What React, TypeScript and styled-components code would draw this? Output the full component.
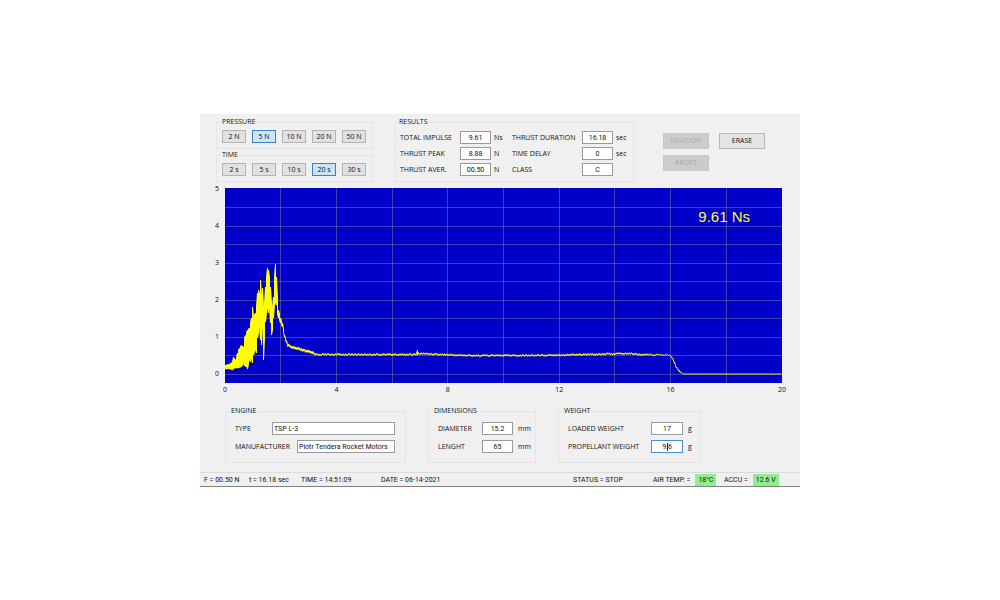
import React, { useState } from 'react'
import styled, { createGlobalStyle } from 'styled-components'

interface Option {
  value: number
  label: string
}

interface Result {
  id: string
  label: string
  value: string
  unit: string
}

const pressures: Option[] = [2, 5, 10, 20, 50].map((value) => ({ value, label: `${value} N` }))
const times: Option[] = [2, 5, 10, 20, 30].map((value) => ({ value, label: `${value} s` }))

const thrustResults: Result[] = [
  { id: 'impulse', label: 'TOTAL IMPULSE', value: '9.61', unit: 'Ns' },
  { id: 'peak', label: 'THRUST PEAK', value: '8.88', unit: 'N' },
  { id: 'aver', label: 'THRUST AVER.', value: '00.50', unit: 'N' },
]

const timeResults: Result[] = [
  { id: 'duration', label: 'THRUST DURATION', value: '16.18', unit: 'sec' },
  { id: 'delay', label: 'TIME DELAY', value: '0', unit: 'sec' },
  { id: 'class', label: 'CLASS', value: 'C', unit: '' },
]

const PLOT_WIDTH = 557
const PLOT_HEIGHT = 195
const ZERO_LINE = 186

// [x, upper edge, lower edge] of the thrust signal
const envelope: number[][] = [
  [0, 177, 181], [4, 176, 181], [7, 174, 182], [8, 169, 181], [10, 172, 180], [13, 162, 180],
  [16, 157, 179], [18, 159, 175], [19, 150, 178], [21, 145, 179], [22, 142, 181], [24, 140, 172],
  [25, 135, 174], [26, 130, 170], [27, 119, 175], [28, 129, 167], [30, 125, 162], [31, 118, 165],
  [32, 105, 150], [33, 102, 145], [34, 106, 138], [35, 92, 152], [36, 108, 157], [37, 100, 139],
  [38, 119, 172], [39, 115, 151], [40, 99, 134], [41, 89, 125], [42, 80, 120], [43, 82, 125],
  [44, 89, 119], [45, 99, 135], [46, 115, 147], [47, 119, 142], [48, 109, 130], [49, 89, 117],
  [50, 76, 115], [51, 89, 117], [52, 109, 126], [53, 122, 130], [55, 130, 135], [57, 135, 139],
  [59, 147, 149], [62, 156, 158], [65, 158, 160], [73, 160, 162], [80, 162, 164], [88, 164, 166],
  [91, 166, 167], [150, 166, 167], [191, 166, 167], [192, 162, 167], [193, 165, 166],
  [215, 166, 167], [240, 167, 168], [300, 167, 168], [360, 166, 167], [404, 165, 166],
  [414, 166, 167], [445, 167, 167], [448, 172, 173], [451, 179, 180], [454, 183, 184],
  [458, 186, 186], [557, 186, 186],
]

const noise = (n: number) => {
  const v = Math.sin(n * 12.9898) * 43758.5453
  return v - Math.floor(v)
}

const buildSignal = () => {
  const points: string[] = []
  let i = 0
  for (let x = 0; x < PLOT_WIDTH; x++) {
    while (i < envelope.length - 2 && envelope[i + 1][0] <= x) i++
    const [x0, top0, bottom0] = envelope[i]
    const [x1, top1, bottom1] = envelope[i + 1]
    const k = (x - x0) / (x1 - x0)
    const wobble = x > 60 && x < 446 ? (noise(x) - 0.5) * 1.2 : 0
    const top = `${x + 0.5},${(top0 + (top1 - top0) * k + wobble).toFixed(1)}`
    const bottom = `${x + 0.5},${(bottom0 + (bottom1 - bottom0) * k + wobble).toFixed(1)}`
    if (x % 2) {
      points.push(bottom, top)
    } else {
      points.push(top, bottom)
    }
  }
  return points.join(' ')
}

const signal = buildSignal()

const ButtonRow: React.FC<{ title: string; options: Option[]; initial: number }> = ({ title, options, initial }) => {
  const [selected, setSelected] = useState(initial)

  return (
    <Group>
      <Legend>{title}</Legend>
      <Options>
        {options.map(({ value, label }) => (
          <OptionButton
            key={value}
            type='button'
            $active={value === selected}
            aria-pressed={value === selected}
            onClick={() => setSelected(value)}
          >
            {label}
          </OptionButton>
        ))}
      </Options>
    </Group>
  )
}

const ResultList: React.FC<{ results: Result[]; labelWidth: number }> = ({ results, labelWidth }) => (
  <Rows $gap={3}>
    {results.map(({ id, label, value, unit }) => (
      <Row key={id}>
        <Label htmlFor={id} $width={labelWidth}>{label}</Label>
        <Field id={id} $width={31} $centered value={value} readOnly />
        <Unit>{unit}</Unit>
      </Row>
    ))}
  </Rows>
)

const Chart = () => (
  <ChartArea>
    <YAxis>
      {[5, 4, 3, 2, 1, 0].map((n) => <span key={n}>{n}</span>)}
    </YAxis>
    <Plot>
      <svg viewBox={`0 0 ${PLOT_WIDTH} ${PLOT_HEIGHT}`} preserveAspectRatio='none' role='img' aria-label='Thrust'>
        <g stroke='#8c8c90' strokeOpacity='0.45' shapeRendering='crispEdges'>
          {Array.from({ length: 10 }, (_, n) => (
            <line key={n} x1={0} x2={PLOT_WIDTH} y1={ZERO_LINE - n * 18.5} y2={ZERO_LINE - n * 18.5} />
          ))}
          {Array.from({ length: 9 }, (_, n) => (
            <line key={n} x1={(n + 1) * 55.7} x2={(n + 1) * 55.7} y1={0} y2={PLOT_HEIGHT} />
          ))}
        </g>
        <polyline points={signal} fill='none' stroke='#ffff00' strokeWidth='1' />
      </svg>
      <Reading>9.61 Ns</Reading>
    </Plot>
    <XAxis>
      {[0, 4, 8, 12, 16, 20].map((n) => <span key={n}>{n}</span>)}
    </XAxis>
  </ChartArea>
)

const App = () => {
  const [type, setType] = useState('TSP L-3')
  const [manufacturer, setManufacturer] = useState('Piotr Tendera Rocket Motors')
  const [diameter, setDiameter] = useState('15.2')
  const [lenght, setLenght] = useState('65')
  const [loaded, setLoaded] = useState('17')
  const [propellant, setPropellant] = useState('9.6')

  return (
    <>
      <GlobalStyle />
      <Window>
        <Header>
          <Selectors>
            <ButtonRow title='PRESSURE' options={pressures} initial={5} />
            <ButtonRow title='TIME' options={times} initial={20} />
          </Selectors>
          <ResultGroup>
            <Legend>RESULTS</Legend>
            <Results>
              <ResultList results={thrustResults} labelWidth={60} />
              <ResultList results={timeResults} labelWidth={70} />
            </Results>
          </ResultGroup>
          <Commands>
            <CommandButton type='button' disabled>IGNITION</CommandButton>
            <CommandButton type='button'>ERASE</CommandButton>
            <CommandButton type='button' disabled>ABORT</CommandButton>
          </Commands>
        </Header>

        <Chart />

        <Details>
          <DetailGroup>
            <Legend>ENGINE</Legend>
            <Rows $gap={5}>
              <Row>
                <Label htmlFor='type' $width={37}>TYPE</Label>
                <Field id='type' $width={123} value={type} onChange={(e) => setType(e.target.value)} />
              </Row>
              <Row>
                <Label htmlFor='manufacturer' $width={62}>MANUFACTURER</Label>
                <Field
                  id='manufacturer'
                  $width={98}
                  value={manufacturer}
                  onChange={(e) => setManufacturer(e.target.value)}
                />
              </Row>
            </Rows>
          </DetailGroup>
          <DetailGroup>
            <Legend>DIMENSIONS</Legend>
            <Rows $gap={5}>
              <Row>
                <Label htmlFor='diameter' $width={44}>DIAMETER</Label>
                <Field id='diameter' $width={31} $centered value={diameter} onChange={(e) => setDiameter(e.target.value)} />
                <Unit>mm</Unit>
              </Row>
              <Row>
                <Label htmlFor='lenght' $width={44}>LENGHT</Label>
                <Field id='lenght' $width={31} $centered value={lenght} onChange={(e) => setLenght(e.target.value)} />
                <Unit>mm</Unit>
              </Row>
            </Rows>
          </DetailGroup>
          <DetailGroup>
            <Legend>WEIGHT</Legend>
            <Rows $gap={5}>
              <Row>
                <Label htmlFor='loaded' $width={83}>LOADED WEIGHT</Label>
                <Field id='loaded' $width={32} $centered value={loaded} onChange={(e) => setLoaded(e.target.value)} />
                <Unit>g</Unit>
              </Row>
              <Row>
                <Label htmlFor='propellant' $width={83}>PROPELLANT WEIGHT</Label>
                <Editing>
                  <Field
                    id='propellant'
                    $width={32}
                    $centered
                    $active
                    value={propellant}
                    onChange={(e) => setPropellant(e.target.value)}
                  />
                </Editing>
                <Unit>g</Unit>
              </Row>
            </Rows>
          </DetailGroup>
        </Details>

        <StatusBar>
          <span>F = 00.50 N</span>
          <span>t = 16.18 sec</span>
          <span>TIME = 14:51:09</span>
          <span>DATE = 06-14-2021</span>
          <span>STATUS = STOP</span>
          <Sensor>AIR TEMP. = <Badge>18°C</Badge></Sensor>
          <Sensor>ACCU = <Badge>12.6 V</Badge></Sensor>
        </StatusBar>
      </Window>
    </>
  )
}

const GlobalStyle = createGlobalStyle`
  * {
    box-sizing: border-box;
  }

  body {
    margin: 0;
    background: #ffffff;
  }

  body, button, input {
    font-family: 'Open Sans', 'Liberation Sans', sans-serif;
    font-size: 7px;
    line-height: 8px;
    color: #111111;
  }
`

const Window = styled.main`
  max-width: 600px;
  margin: 114px auto 0;
  background: #f0f0f0;
  border-bottom: 1px solid #808080;
`

const Header = styled.header`
  display: flex;
  align-items: flex-start;
  padding: 4px 16px 6px;
`

const Selectors = styled.div`
  display: grid;
  gap: 2px;
  margin-right: 22px;
`

const Group = styled.fieldset`
  min-width: 0;
  margin: 0;
  padding: 4px 6px 5px 5px;
  border: 1px solid #e4e4e4;
`

const Legend = styled.legend`
  margin-left: -1px;
  padding: 0 1px;
  line-height: 8px;
`

const ResultGroup = styled(Group)`
  padding: 4px 2px 5px 4px;

  ${Legend} {
    margin-left: -2px;
  }
`

const Options = styled.div`
  display: flex;
  gap: 6px;
`

const OptionButton = styled.button<{ $active: boolean }>`
  width: 24px;
  height: 13px;
  padding: 0;
  border: 1px solid ${({ $active }) => ($active ? '#3f82c4' : '#b4b4b4')};
  background: ${({ $active }) => ($active ? '#cce4f7' : '#e1e1e1')};
`

const Results = styled.div`
  display: flex;
  gap: 3px;
  padding-top: 1px;
`

const Rows = styled.div<{ $gap: number }>`
  display: grid;
  gap: ${({ $gap }) => $gap}px;
`

const Row = styled.div`
  display: flex;
  align-items: center;
`

const Label = styled.label<{ $width: number }>`
  width: ${({ $width }) => $width}px;
  white-space: nowrap;
`

const Field = styled.input<{ $width: number; $centered?: boolean; $active?: boolean }>`
  width: ${({ $width }) => $width}px;
  height: 13px;
  padding: 0 1px;
  border: 1px solid ${({ $active }) => ($active ? '#4a90d9' : '#9a9a9a')};
  background: #ffffff;
  font-family: Roboto, 'Liberation Sans', sans-serif;
  text-align: ${({ $centered }) => ($centered ? 'center' : 'left')};
  outline: none;
`

const Unit = styled.span`
  width: 18px;
  padding-left: 3px;
`

const Commands = styled.div`
  display: grid;
  grid-template-columns: 46px 46px;
  gap: 6px 10px;
  margin: 15px 19px 0 auto;
`

const CommandButton = styled.button`
  height: 16px;
  padding: 0;
  border: 1px solid #b8b8b8;
  background: #e4e4e4;

  &:disabled {
    border-color: #c8c8c8;
    background: #cccccc;
    color: #aaaaaa;
  }
`

const ChartArea = styled.section`
  display: grid;
  grid-template-columns: 25px 1fr;
  padding-right: 18px;
`

const YAxis = styled.div`
  display: flex;
  flex-direction: column;
  justify-content: space-between;
  margin: -3px 6px 5px 0;
  text-align: right;
`

const Plot = styled.div`
  position: relative;
  height: 195px;
  background: #0000c8;

  svg {
    display: block;
    width: 100%;
    height: 100%;
  }
`

const Reading = styled.output`
  position: absolute;
  top: 20px;
  right: 32px;
  font: 15px/18px 'Liberation Sans', sans-serif;
  color: #ffff3c;
`

const XAxis = styled.div`
  grid-column: 2;
  display: flex;
  justify-content: space-between;
  margin: 3px -10px 0;

  span {
    width: 20px;
    text-align: center;
  }
`

const Details = styled.section`
  display: grid;
  grid-template-columns: 181px 108px 143px;
  gap: 22px;
  padding: 13px 25px 9px;
`

const DetailGroup = styled(Group)`
  padding: 7px 0 9px 9px;

  ${Legend} {
    margin-left: -5px;
  }

  ${Unit} {
    padding-left: 5px;
  }
`

const Editing = styled.span`
  position: relative;
  display: flex;

  &::after {
    content: '';
    position: absolute;
    top: 3px;
    left: 50%;
    width: 1px;
    height: 8px;
    background: #222222;
  }
`

const StatusBar = styled.footer`
  display: grid;
  grid-template-columns: 45px 52px 80px 1fr 80px 71px 76px;
  align-items: center;
  height: 14px;
  padding-left: 4px;
  border-top: 1px solid #dcdcdc;
  font-family: Roboto, 'Liberation Sans', sans-serif;
  white-space: nowrap;
`

const Sensor = styled.span`
  display: flex;
  align-items: center;
  gap: 5px;
`

const Badge = styled.span`
  padding: 2px 3px;
  background: #90ee90;
`

export default App
